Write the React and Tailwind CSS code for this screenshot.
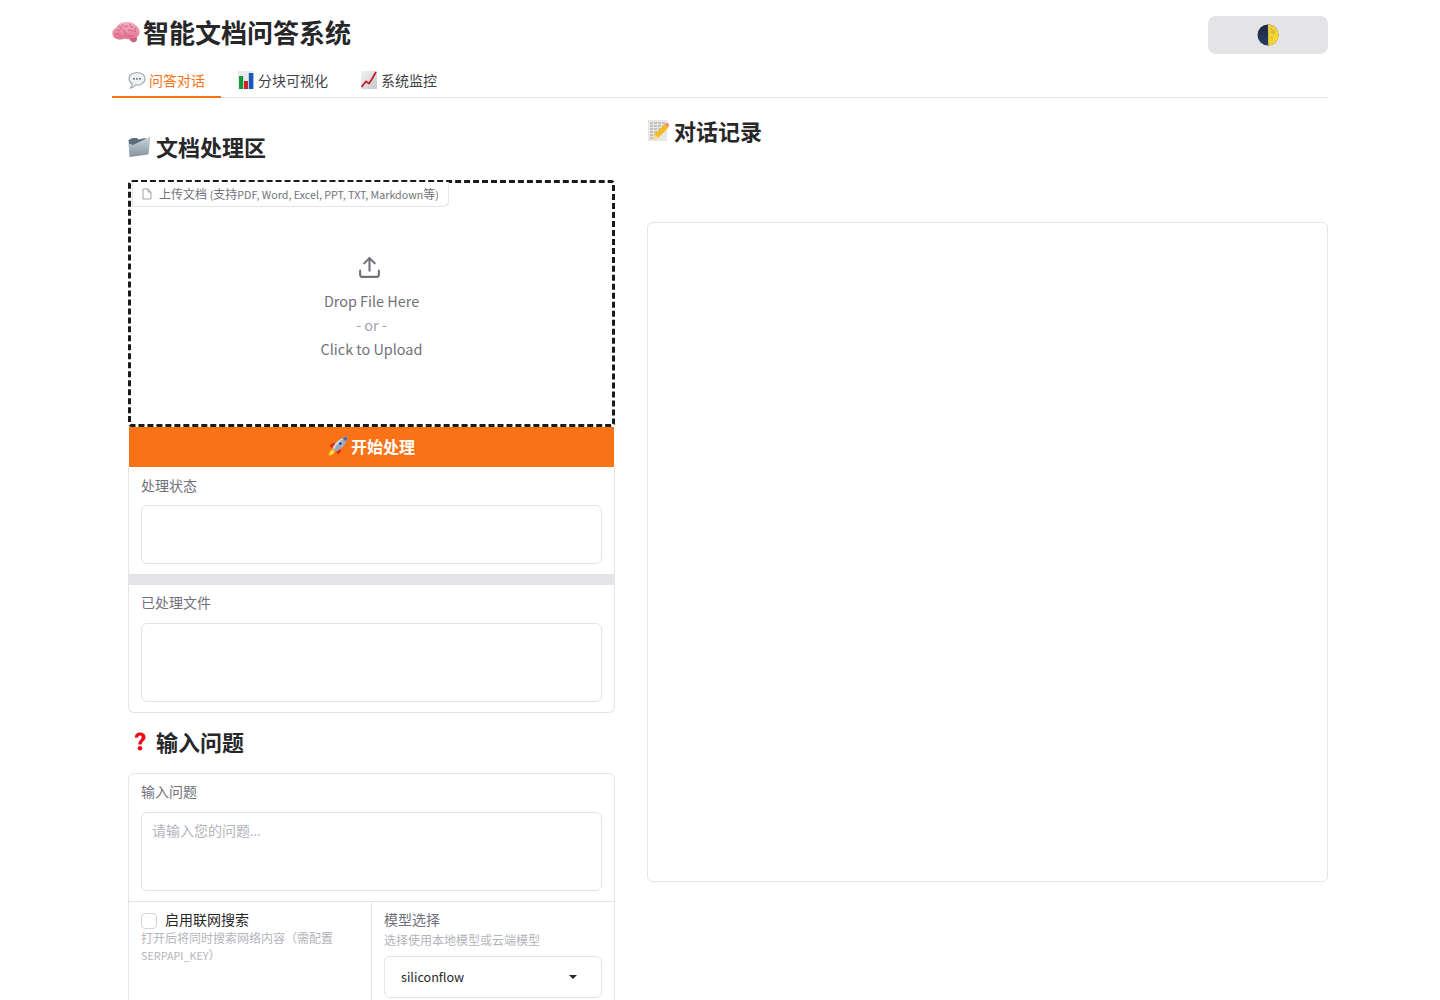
import React from "react";

const Brain = () => (
  <svg width="28" height="24" viewBox="0 0 28 24" className="shrink-0 mt-[1px]">
    <defs>
      <linearGradient id="br" x1="0" y1="0" x2="0" y2="1">
        <stop offset="0" stopColor="#f6b4c4" />
        <stop offset="1" stopColor="#e0708c" />
      </linearGradient>
    </defs>
    <path d="M17 18c1 3 3 5 6 4 2-.7 2.500-3 1.500-5z" fill="#c95f7c" />
    <path d="M.5 14.500C0 11 2 8.500 4.500 7.500 6 4 10 1.500 14.500 2c3.500-.5 7.500.5 9.500 3.500 2.500 1.500 4 4.500 3.500 7.500-.5 3-3 5-6 5-3 1.500-6 1.500-9 .5-2 1-5 1.500-7.500.5C2.500 18 1 16.500.5 14.500z" fill="url(#br)" />
    <path d="M5 10c2 1 3.500 0 4.500-2M10.500 4.500c1 2 3 2.500 5 1.500M18 4c-.5 2 1 3.500 3 3M24 7.500c-1 1-1.500 2.500-.5 4.500M3.500 14c2-1 4 0 5 1.500M11 10c2 1 3 3 2 5.500M16.500 10.500c1.500-1 4-.5 5 1M15.500 15.500c1.500 1 3.500 1 5 .5M6.500 6.500c1 .5 2 .5 3 0" stroke="#cf5f7c" strokeWidth="1" fill="none" strokeLinecap="round" />
  </svg>
);

const Bubble = () => (
  <svg width="18" height="19" viewBox="0 0 18 18" className="shrink-0">
    <path d="M9 1C4.400 1 1 3.700 1 7.300c0 2.200 1.300 4.100 3.300 5.300-.2 1.500-1 3-1.800 3.900 2-.2 3.800-1.500 5-2.900.5.100 1 .1 1.500.1 4.600 0 8-2.800 8-6.400S13.600 1 9 1z" fill="#f0f1f2" stroke="#a8adb0" strokeWidth="1.200" />
    <circle cx="6" cy="7.300" r=".9" fill="#555" />
    <circle cx="9" cy="7.300" r=".9" fill="#555" />
    <circle cx="12" cy="7.300" r=".9" fill="#555" />
  </svg>
);

const BarChart = () => (
  <svg width="16" height="18" viewBox="0 0 16 18" className="shrink-0">
    <rect x="0" y="0" width="16" height="18" fill="#e8eaec" />
    <rect x="1" y="5" width="4.200" height="13" fill="#129a38" />
    <rect x="6" y="10" width="4" height="8" fill="#d41f26" />
    <rect x="10.800" y="2" width="4.500" height="16" fill="#1658bb" />
  </svg>
);

const LineChart = () => (
  <svg width="16" height="18" viewBox="0 0 16 18" className="shrink-0">
    <defs>
      <linearGradient id="lc" x1="0" y1="0" x2="1" y2="1">
        <stop offset="0" stopColor="#f2f3f4" />
        <stop offset="1" stopColor="#c4c8cc" />
      </linearGradient>
    </defs>
    <rect x="0" y="0" width="16" height="18" fill="url(#lc)" />
    <path d="M.5 16 5 10.500l3 2 3-4.500 4-7" stroke="#c4202b" strokeWidth="1.800" fill="none" />
  </svg>
);

const Folder = () => (
  <svg width="23" height="22" viewBox="0 0 23 22" className="shrink-0">
    <defs>
      <linearGradient id="fo" x1="0" y1="0" x2="0" y2="1">
        <stop offset="0" stopColor="#cdd7df" />
        <stop offset="1" stopColor="#84939f" />
      </linearGradient>
    </defs>
    <path d="M.5 4 4.500 2h4.500l1.500 1.500 7-1.500.5 4L2 16z" fill="#5b6d7c" />
    <path d="M1.500 21 .5 7.500 5 9 22.500.5 20.500 18.500z" fill="url(#fo)" />
  </svg>
);

const Rocket = () => (
  <svg width="20" height="20" viewBox="0 0 20 20" className="shrink-0">
    <path d="M.5 19.500c.3-3.500 1.800-6 4.500-6.500l2 2c-.5 3-3 4.500-6.500 4.500z" fill="#f8c51f" />
    <path d="M2.500 18c.3-1.500 1-2.500 2.300-3l.7.7c-.3 1.300-1.500 2-3 2.300z" fill="#fff3b0" />
    <path d="M1.500 9.500 6 6.500l2 2-3.500 4z" fill="#e0241a" />
    <path d="M10.500 18.500l3-4.500-2-2-3.500 3.500z" fill="#e0241a" />
    <path d="M4.500 12C7.500 6 12.500 1.500 19.500.5 18.500 7.500 14 12.500 8 15.500z" fill="#d2dbe3" />
    <path d="M6 13.500C9 8 13 3.500 19.500.5 18.500 7.500 14 12.500 8 15.500z" fill="#97a8ba" />
    <path d="M14.500 2 18 5.500 19.500.5z" fill="#3f63ad" />
    <circle cx="12.300" cy="7.700" r="2" fill="#2b4c8c" stroke="#e8eef2" strokeWidth=".7" />
  </svg>
);

const Memo = () => (
  <svg width="21" height="23" viewBox="0 0 21 23" className="shrink-0">
    <rect x="0" y="1" width="19" height="21" fill="#e8e7e2" />
    <path d="M2 4h15M2 7h15M2 10h13M2 13h10M2 16h7M2 19h5" stroke="#9a9a9a" strokeWidth="1" strokeDasharray="3 1" />
    <path d="M5 21l1.500-5.500L17 5l3.500 3.500L10 19z" fill="#f5b921" />
    <path d="M17 5l2-1.500 1.500 1.500.5 2-1 1z" fill="#e8788a" />
    <path d="M5 21l1.500-5.500 4 3.500z" fill="#f3d9a5" />
  </svg>
);

const Question = () => (
  <svg width="12" height="19" viewBox="0 0 12 19" className="shrink-0">
    <path d="M.8 5.500C.8 2.500 3 .5 6 .5c3.200 0 5.500 1.800 5.500 4.700 0 3.800-3.800 4-3.800 7.300H4.400c-.2-4.200 3.300-4.800 3.300-7.200 0-1.200-.7-1.800-1.700-1.800-1.100 0-1.800.9-1.800 2.300z" fill="#ec0c14" />
    <circle cx="6" cy="16.300" r="2.300" fill="#ec0c14" />
  </svg>
);

const Moon = () => (
  <svg width="22" height="22" viewBox="0 0 22 22">
    <defs>
      <linearGradient id="mo" x1="0" y1="0" x2="1" y2="1">
        <stop offset="0" stopColor="#e8c94e" />
        <stop offset="1" stopColor="#fbe01a" />
      </linearGradient>
      <linearGradient id="md" x1="0" y1="0" x2="0" y2="1">
        <stop offset="0" stopColor="#1a2740" />
        <stop offset="1" stopColor="#2c3f63" />
      </linearGradient>
    </defs>
    <circle cx="11" cy="11" r="10.500" fill="url(#md)" />
    <path d="M11 .5a10.500 10.500 0 0 1 0 21c.8-2-.4-4 .2-6-.5-2 .3-3-.2-5 .4-3-.5-6 0-10z" fill="url(#mo)" />
    <circle cx="16" cy="8" r="2.200" fill="#cfa93f" opacity=".6" />
    <circle cx="14" cy="5" r="1.200" fill="#cfa93f" opacity=".5" />
    <circle cx="14.500" cy="14" r="1.300" fill="#cfa93f" opacity=".4" />
  </svg>
);

const FileIcon = () => (
  <svg width="10" height="12" viewBox="0 0 10 12" fill="none" stroke="#a1a1aa" strokeWidth="1" className="shrink-0">
    <path d="M1 1h5l3 3v7H1z" strokeLinejoin="round" />
    <path d="M6 1v3h3" strokeLinejoin="round" />
  </svg>
);

const UploadIcon = () => (
  <svg width="25" height="25" viewBox="0 0 24 24" fill="none" stroke="#71717a" strokeWidth="2" strokeLinecap="round" strokeLinejoin="round">
    <path d="M12 3v12" />
    <path d="m17 8-5-5-5 5" />
    <path d="M21 15v4a2 2 0 0 1-2 2H5a2 2 0 0 1-2-2v-4" />
  </svg>
);

const Tab = ({ icon, label, active, w }) => (
  <div className={`flex items-center h-[34px] pl-4 border-b-2 ${w} ${active ? "border-[#f97316] text-[#f97316]" : "border-transparent text-[#3f3f46]"}`}>
    {icon}
    <span className="text-[14px]">{label}</span>
  </div>
);

const H2 = ({ icon, children, gap }) => (
  <h2 className={`flex items-center ${gap} h-[33px] text-[22px] font-semibold text-[#27272a]`}>
    {icon}
    {children}
  </h2>
);

export default function App() {
  return (
    <div className="h-[1000px] overflow-hidden bg-white" style={{ fontFamily: '"Noto Sans CJK SC", "Noto Sans", sans-serif' }}>
      <div className="w-[1216px] mx-auto">
        <header className="flex justify-between items-start pt-4 h-[64px]">
          <h1 className="flex items-center gap-[3px] h-[34px] -mt-[2px] text-[26px] font-semibold text-[#27272a]">
            <Brain />
            智能文档问答系统
          </h1>
          <div className="w-[120px] h-[38px] rounded-lg bg-[#e4e4e7] flex items-center justify-center">
            <Moon />
          </div>
        </header>

        <nav className="flex border-b border-[#e4e4e7] h-[34px]">
          <Tab icon={<Bubble />} label="问答对话" active w="w-[109px] gap-[3px]" />
          <Tab icon={<BarChart />} label="分块可视化" w="w-[122px] ml-[1px] gap-[4px]" />
          <Tab icon={<LineChart />} label="系统监控" w="w-[110px] ml-[1px] gap-[4px]" />
        </nav>

        <main className="flex gap-[32px] pl-4">
          <section className="w-[487px] shrink-0">
            <div className="mt-[32px]">
              <H2 icon={<Folder />} gap="gap-[5px]">文档处理区</H2>
            </div>

            <div className="relative mt-[17px] h-[247px] border-[3px] border-dashed border-[#1a1a1a] rounded-[4px] flex flex-col items-center">
              <div className="absolute -top-[1px] left-[1px] h-[25px] w-[317px] flex items-center gap-[7px] pl-[9px] border border-t-0 border-[#e4e4e7] rounded-br-md text-[12px] text-[#71717a] bg-white whitespace-nowrap">
                <FileIcon />
                <span className="leading-[16px]">上传文档 <span className="text-[10.7px]">(</span>支持<span className="text-[10.7px]">PDF, Word, Excel, PPT, TXT, Markdown</span>等<span className="text-[10.7px]">)</span></span>
              </div>
              <div className="mt-[72px] -ml-[5px]"><UploadIcon /></div>
              <div className="mt-[9px] text-[14.4px] leading-[24px] text-[#71717a]">Drop File Here</div>
              <div className="text-[14.4px] leading-[24px] text-[#a1a1aa]">- or -</div>
              <div className="text-[14.4px] leading-[24px] text-[#71717a]">Click to Upload</div>
            </div>

            <button className="w-[485px] ml-[1px] h-[40px] pb-[2px] bg-[#f97316] text-white text-[16px] font-semibold flex items-center justify-center gap-[3px]">
              <Rocket />
              开始处理
            </button>

            <div className="border border-t-0 border-[#e4e4e7] rounded-b-md">
              <div className="px-3 pt-[8px] pb-[10px]">
                <div className="text-[14px] leading-[20px] text-[#71717a]">处理状态</div>
                <div className="mt-[10px] h-[59px] border border-[#e4e4e7] rounded-md"></div>
              </div>
              <div className="h-[11px] bg-[#e4e4e7]"></div>
              <div className="px-3 pt-[7px] pb-[10px]">
                <div className="text-[14px] leading-[20px] text-[#71717a]">已处理文件</div>
                <div className="mt-[11px] h-[79px] border border-[#e4e4e7] rounded-md"></div>
              </div>
            </div>

            <div className="mt-[12px]">
              <H2 icon={<span className="block ml-[6px]"><Question /></span>} gap="gap-[10px]">输入问题</H2>
            </div>

            <div className="mt-[15px] border border-[#e4e4e7] rounded-md h-[300px]">
              <div className="px-3 pt-[7px] pb-[10px] border-b border-[#e4e4e7]">
                <div className="text-[14px] leading-[20px] text-[#71717a]">输入问题</div>
                <div className="mt-[11px] h-[79px] border border-[#e4e4e7] rounded-md px-[10px] pt-[7px] text-[14px] leading-[20px] text-[#b4b4bc]">请输入您的问题<span className="text-[12.6px]">...</span></div>
              </div>
              <div className="flex h-full">
                <div className="w-[243px] px-3 pt-[7px] border-r border-[#e4e4e7]">
                  <div className="flex items-center gap-[8px] h-[20px]">
                    <span className="block mt-[4px] w-[16px] h-[16px] border border-[#d4d4d8] rounded-[4px]"></span>
                    <span className="text-[14px] text-[#27272a]">启用联网搜索</span>
                  </div>
                  <div className="text-[12px] leading-[17px] text-[#b4b4bc]">打开后将同时搜索网络内容（需配置<span className="text-[10.8px]">SERPAPI_KEY</span>）</div>
                </div>
                <div className="flex-1 px-3 pt-[7px]">
                  <div className="text-[14px] leading-[20px] text-[#71717a]">模型选择</div>
                  <div className="mt-[2px] text-[12px] leading-[18px] text-[#b4b4bc]">选择使用本地模型或云端模型</div>
                  <div className="mt-[7px] h-[42px] border border-[#e4e4e7] rounded-md flex items-center justify-between pl-[16px] pr-[24px] text-[12.6px] text-[#27272a]">
                    <span>siliconflow</span>
                    <svg width="8" height="4" viewBox="0 0 8 4"><path d="M0 0h8L4 4z" fill="#27272a" /></svg>
                  </div>
                </div>
              </div>
            </div>
          </section>

          <section className="flex-1">
            <div className="mt-[16px] ml-[1px]">
              <H2 icon={<Memo />} gap="gap-[5px]">对话记录</H2>
            </div>
            <div className="mt-[75px] h-[660px] border border-[#e4e4e7] rounded-md"></div>
          </section>
        </main>
      </div>
    </div>
  );
}
